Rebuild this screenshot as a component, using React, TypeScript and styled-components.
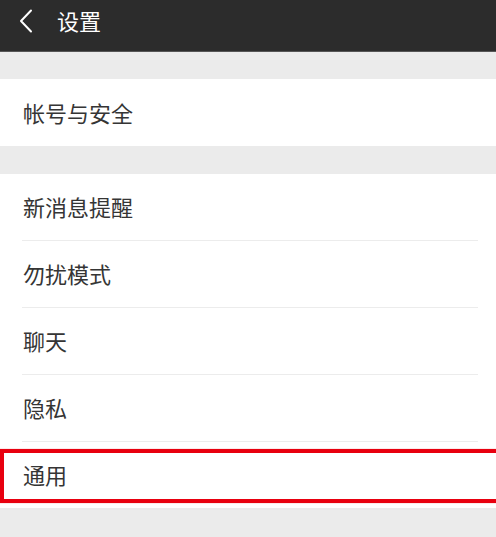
import styled, { createGlobalStyle } from "styled-components";

const GlobalStyle = createGlobalStyle`
  html, body {
    margin: 0;
    padding: 0;
    background: #ebebeb;
  }
  body {
    font-family: "Noto Sans CJK SC", "Noto Sans", sans-serif;
  }
`;

const Page = styled.div`
  width: 496px;
  height: 537px;
  overflow: hidden;
  background: #ebebeb;
`;

const Header = styled.div`
  height: 52px;
  background: #2c2c2c;
  border-bottom: 1px solid #565656;
  display: flex;
  align-items: flex-start;
  padding-top: 6px;
  box-sizing: border-box;
  color: #fff;
`;

const Back = styled.svg`
  width: 14px;
  height: 24px;
  margin: 3px 0 0 19px;
`;

const Title = styled.h1`
  margin: 0 0 0 24px;
  font-size: 22px;
  font-weight: 400;
  line-height: 28px;
  letter-spacing: 0;
`;

const Group = styled.div<{ $gap: number }>`
  margin-top: ${(p) => p.$gap}px;
  background: #fff;
`;

const Row = styled.div<{ $h: number }>`
  position: relative;
  height: ${(p) => p.$h}px;
  display: flex;
  align-items: center;
  padding-left: 23px;
  font-size: 22px;
  color: #353535;
`;

const Divider = styled.div`
  height: 1px;
  margin: 0 18px 0 22px;
  background: #ececec;
`;

const Highlight = styled.div`
  position: absolute;
  top: 7px;
  bottom: 5px;
  left: 0;
  right: -6px;
  border: 4px solid #e8000f;
  box-shadow: 0 0 1px rgba(232, 0, 15, 0.5);
  pointer-events: none;
`;

const Label = styled.span`
  position: relative;
  top: -1px;
`;

const items = ["新消息提醒", "勿扰模式", "聊天", "隐私", "通用"];

export default function App() {
  return (
    <Page>
      <GlobalStyle />
      <Header>
        <Back viewBox="0 0 14 24" fill="none">
          <path d="M12 1.5 L2 12 L12 22.5" stroke="#fff" strokeWidth="2" strokeLinecap="round" strokeLinejoin="round" />
        </Back>
        <Title>设置</Title>
      </Header>
      <Group $gap={27}>
        <Row $h={67}>
          <Label>帐号与安全</Label>
        </Row>
      </Group>
      <Group $gap={28}>
        {items.map((t, i) => (
          <div key={t}>
            {i > 0 && <Divider />}
            <Row $h={66}>
              <Label>{t}</Label>
              {t === "通用" && <Highlight />}
            </Row>
          </div>
        ))}
      </Group>
    </Page>
  );
}
